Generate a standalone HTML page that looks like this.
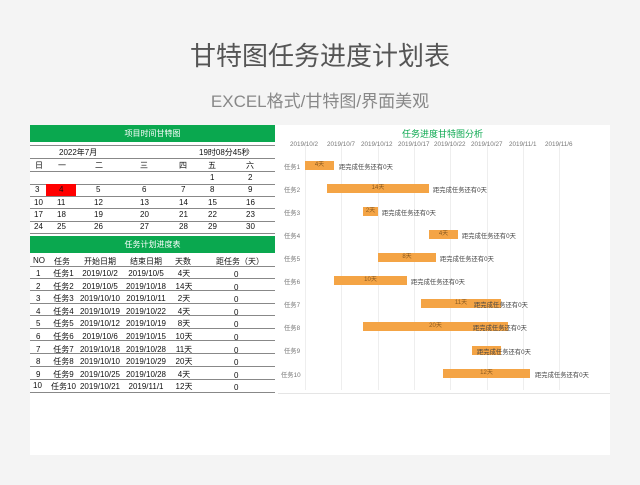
<!DOCTYPE html><html><head><meta charset="utf-8"><style>
body{margin:0;width:640px;height:485px;background:#f4f4f4;position:relative;overflow:hidden;font-family:"Liberation Sans","Noto Sans CJK SC",sans-serif;}
.a{position:absolute;white-space:nowrap}
.t{font-size:8px;color:#111;}
.g{font-size:6.3px;color:#777;}
.bar{position:absolute;height:9px;background:#f4a445;font-size:6px;color:#8a5a20;text-align:center;line-height:9px}
.ln{position:absolute;left:30px;width:245px;height:1px;background:#888}
.vl{position:absolute;top:142px;width:1px;height:248px;background:#eee}
</style></head><body>
<div class="a" style="left:0;width:640px;top:36px;text-align:center;font-size:26px;color:#555">甘特图任务进度计划表</div>
<div class="a" style="left:0;width:640px;top:87px;text-align:center;font-size:17px;color:#888">EXCEL格式/甘特图/界面美观</div>
<div class="a" style="left:30px;top:125px;width:580px;height:330px;background:#fff"></div>
<div class="a" style="left:30px;top:125px;width:245px;height:17px;background:#0aa84f;color:#fff;font-size:8px;text-align:center;line-height:17px">项目时间甘特图</div>
<div class="ln" style="top:145px"></div><div class="ln" style="top:158px"></div><div class="ln" style="top:171px"></div>
<div class="ln" style="top:184px"></div><div class="ln" style="top:196px"></div><div class="ln" style="top:208px"></div><div class="ln" style="top:221px"></div><div class="ln" style="top:233px"></div>
<div class="a" style="left:46px;top:184px;width:30px;height:12px;background:#f00"></div>
<div class="a t" style="left:59px;top:147px">2022年7月</div><div class="a t" style="left:199px;top:147px">19时08分45秒</div>
<div class="a t" style="left:35px;top:160px">日</div><div class="a t" style="left:58px;top:160px">一</div><div class="a t" style="left:95px;top:160px">二</div><div class="a t" style="left:140px;top:160px">三</div><div class="a t" style="left:179px;top:160px">四</div><div class="a t" style="left:208px;top:160px">五</div><div class="a t" style="left:246px;top:160px">六</div>
<div class="a t" style="left:210px;top:173px">1</div><div class="a t" style="left:248px;top:173px">2</div>
<div class="a t" style="left:35px;top:185px">3</div><div class="a t" style="left:59px;top:185px">4</div><div class="a t" style="left:96px;top:185px">5</div><div class="a t" style="left:142px;top:185px">6</div><div class="a t" style="left:181px;top:185px">7</div><div class="a t" style="left:210px;top:185px">8</div><div class="a t" style="left:248px;top:185px">9</div>
<div class="a t" style="left:34px;top:198px">10</div><div class="a t" style="left:57px;top:198px">11</div><div class="a t" style="left:94px;top:198px">12</div><div class="a t" style="left:140px;top:198px">13</div><div class="a t" style="left:179px;top:198px">14</div><div class="a t" style="left:208px;top:198px">15</div><div class="a t" style="left:246px;top:198px">16</div>
<div class="a t" style="left:34px;top:210px">17</div><div class="a t" style="left:57px;top:210px">18</div><div class="a t" style="left:94px;top:210px">19</div><div class="a t" style="left:140px;top:210px">20</div><div class="a t" style="left:179px;top:210px">21</div><div class="a t" style="left:208px;top:210px">22</div><div class="a t" style="left:246px;top:210px">23</div>
<div class="a t" style="left:34px;top:222px">24</div><div class="a t" style="left:57px;top:222px">25</div><div class="a t" style="left:94px;top:222px">26</div><div class="a t" style="left:140px;top:222px">27</div><div class="a t" style="left:179px;top:222px">28</div><div class="a t" style="left:208px;top:222px">29</div><div class="a t" style="left:246px;top:222px">30</div>
<div class="a" style="left:30px;top:236px;width:245px;height:17px;background:#0aa84f;color:#fff;font-size:8px;text-align:center;line-height:17px">任务计划进度表</div>
<div class="ln" style="top:266px"></div><div class="ln" style="top:278px"></div><div class="ln" style="top:290px"></div><div class="ln" style="top:303px"></div><div class="ln" style="top:315px"></div><div class="ln" style="top:328px"></div><div class="ln" style="top:340px"></div><div class="ln" style="top:353px"></div><div class="ln" style="top:366px"></div><div class="ln" style="top:379px"></div><div class="ln" style="top:392px"></div>
<div class="a t" style="left:33px;top:256px">NO</div><div class="a t" style="left:54px;top:256px">任务</div><div class="a t" style="left:84px;top:256px">开始日期</div><div class="a t" style="left:130px;top:256px">结束日期</div><div class="a t" style="left:175px;top:256px">天数</div><div class="a t" style="left:216px;top:256px">距任务（天）</div>
<div class="a t" style="left:36px;top:268px;line-height:12.6px">1<br>2<br>3<br>4<br>5<br>6<br>7<br>8<br>9</div>
<div class="a t" style="left:33px;top:381px">10</div>
<div class="a t" style="left:51px;top:268px;line-height:12.6px;text-align:center;width:25px">任务1<br>任务2<br>任务3<br>任务4<br>任务5<br>任务6<br>任务7<br>任务8<br>任务9<br>任务10</div>
<div class="a t" style="left:77px;top:268px;line-height:12.6px;text-align:center;width:46px">2019/10/2<br>2019/10/5<br>2019/10/10<br>2019/10/19<br>2019/10/12<br>2019/10/6<br>2019/10/18<br>2019/10/10<br>2019/10/25<br>2019/10/21</div>
<div class="a t" style="left:123px;top:268px;line-height:12.6px;text-align:center;width:46px">2019/10/5<br>2019/10/18<br>2019/10/11<br>2019/10/22<br>2019/10/19<br>2019/10/15<br>2019/10/28<br>2019/10/29<br>2019/10/28<br>2019/11/1</div>
<div class="a t" style="left:172px;top:268px;line-height:12.6px;text-align:center;width:24px">4天<br>14天<br>2天<br>4天<br>8天<br>10天<br>11天<br>20天<br>4天<br>12天</div>
<div class="a t" style="left:234px;top:269px;line-height:12.6px">0<br>0<br>0<br>0<br>0<br>0<br>0<br>0<br>0<br>0</div>
<div class="a" style="left:275px;width:335px;top:127px;text-align:center;font-size:9px;color:#0aa84f">任务进度甘特图分析</div>
<div class="vl" style="left:305px"></div><div class="vl" style="left:341px"></div><div class="vl" style="left:378px"></div><div class="vl" style="left:414px"></div><div class="vl" style="left:450px"></div><div class="vl" style="left:487px"></div><div class="vl" style="left:523px"></div><div class="vl" style="left:559px"></div>
<div class="a g" style="left:290px;top:141px">2019/10/2</div><div class="a g" style="left:327px;top:141px">2019/10/7</div><div class="a g" style="left:361px;top:141px">2019/10/12</div><div class="a g" style="left:398px;top:141px">2019/10/17</div><div class="a g" style="left:434px;top:141px">2019/10/22</div><div class="a g" style="left:471px;top:141px">2019/10/27</div><div class="a g" style="left:509px;top:141px">2019/11/1</div><div class="a g" style="left:545px;top:141px">2019/11/6</div>
<div class="a g" style="left:284px;top:162px">任务1</div><div class="a g" style="left:284px;top:185px">任务2</div><div class="a g" style="left:284px;top:208px">任务3</div><div class="a g" style="left:284px;top:231px">任务4</div><div class="a g" style="left:284px;top:254px">任务5</div><div class="a g" style="left:284px;top:277px">任务6</div><div class="a g" style="left:284px;top:300px">任务7</div><div class="a g" style="left:284px;top:323px">任务8</div><div class="a g" style="left:284px;top:346px">任务9</div><div class="a g" style="left:281px;top:370px">任务10</div>
<div class="bar" style="left:305px;top:161px;width:29px">4天</div><div class="a g" style="left:339px;top:162px;color:#444">距完成任务还有0天</div>
<div class="bar" style="left:327px;top:184px;width:102px">14天</div><div class="a g" style="left:433px;top:185px;color:#444">距完成任务还有0天</div>
<div class="bar" style="left:363px;top:207px;width:15px">2天</div><div class="a g" style="left:382px;top:208px;color:#444">距完成任务还有0天</div>
<div class="bar" style="left:429px;top:230px;width:29px">4天</div><div class="a g" style="left:462px;top:231px;color:#444">距完成任务还有0天</div>
<div class="bar" style="left:378px;top:253px;width:58px">8天</div><div class="a g" style="left:440px;top:254px;color:#444">距完成任务还有0天</div>
<div class="bar" style="left:334px;top:276px;width:73px">10天</div><div class="a g" style="left:411px;top:277px;color:#444">距完成任务还有0天</div>
<div class="bar" style="left:421px;top:299px;width:80px">11天</div><div class="a g" style="left:474px;top:300px;color:#444">距完成任务还有0天</div>
<div class="bar" style="left:363px;top:322px;width:145px">20天</div><div class="a g" style="left:473px;top:323px;color:#444">距完成任务还有0天</div>
<div class="bar" style="left:472px;top:346px;width:29px"></div><div class="a g" style="left:477px;top:347px;color:#444">距完成任务还有0天</div>
<div class="bar" style="left:443px;top:369px;width:87px">12天</div><div class="a g" style="left:535px;top:370px;color:#444">距完成任务还有0天</div>
<div class="a" style="left:278px;top:393px;width:332px;height:1px;background:#e5e5e5"></div>
</body></html>
